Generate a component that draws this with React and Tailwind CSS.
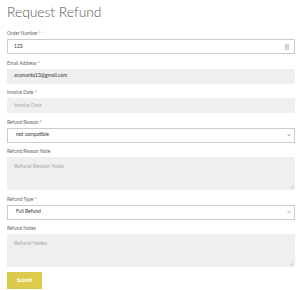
import React from 'react';

function Label({ children }) {
  return <div className="h-[6px] mb-[3px] text-[4.8px] leading-[6px] text-[#666]">{children}</div>;
}

function Chevron() {
  return (
    <svg width="4" height="3" viewBox="0 0 4 3" className="absolute right-[3px] top-1/2 -translate-y-1/2">
      <path d="M0.5 0.8 L2 2.2 L3.5 0.8" fill="none" stroke="#777" strokeWidth="0.7" />
    </svg>
  );
}

function SelectBox({ value }) {
  return (
    <div className="relative h-[15px] border border-[#ccc] bg-white flex items-center pl-[8px] text-[5px] text-[#333]">
      {value}
      <Chevron />
    </div>
  );
}

function Resize() {
  return (
    <svg width="4" height="4" viewBox="0 0 4 4" className="absolute right-[1px] bottom-[1px]">
      <path d="M0.5 3.5 L3.5 0.5 M2 3.5 L3.5 2" stroke="#aaa" strokeWidth="0.5" />
    </svg>
  );
}

export default function App() {
  return (
    <div className="w-[300px] h-[290px] bg-white pl-[7px] pr-[5px] overflow-hidden" style={{ fontFamily: 'Lato, sans-serif' }}>
      <h1 className="text-[13.8px] leading-[22px] font-light text-[#555] mb-[7px] pt-[1px]">Request Refund</h1>

      <div className="mb-[5.5px]">
        <Label>Order Number *</Label>
        <div className="relative h-[15px] border border-[#ccc] bg-white flex items-center pl-[6px] text-[5px] text-[#333]">
          123
          <div className="absolute right-[5px] top-1/2 -translate-y-1/2 w-[4px] h-[6px] bg-[#e5e5e5] border border-[#ccc] flex flex-col">
            <div className="flex-1 border-b border-[#bbb]" />
            <div className="flex-1" />
          </div>
        </div>
      </div>

      <div className="mb-[5.5px]">
        <Label>Email Address *</Label>
        <div className="h-[15px] bg-[#efefef] flex items-center pl-[7px] text-[5px] text-[#333]">arumanto13@gmail.com</div>
      </div>

      <div className="mb-[5.5px]">
        <Label>Invoice Date *</Label>
        <div className="h-[15px] bg-[#efefef] flex items-center pl-[7px] text-[5px] text-[#aaa]">Invoice Date</div>
      </div>

      <div className="mb-[5.5px]">
        <Label>Refund Reason *</Label>
        <SelectBox value="not compatible" />
      </div>

      <div className="mb-[5.5px]">
        <Label>Refund Reason Note</Label>
        <div className="relative h-[33px] bg-[#efefef] pl-[7px] pt-[6px] text-[5.5px] leading-[7px] text-[#aaa]">
          Refund Reason Note
          <Resize />
        </div>
      </div>

      <div className="mb-[5.5px]">
        <Label>Refund Type *</Label>
        <SelectBox value="Full Refund" />
      </div>

      <div className="mb-[5px]">
        <Label>Refund Notes</Label>
        <div className="relative h-[33px] bg-[#efefef] pl-[7px] pt-[6px] text-[5.5px] leading-[7px] text-[#aaa]">
          Refund Notes
          <Resize />
        </div>
      </div>

      <button className="w-[35px] h-[17px] bg-[#dccb4a] text-white text-[5px] font-bold flex items-center justify-center">
        Submit
      </button>
    </div>
  );
}
